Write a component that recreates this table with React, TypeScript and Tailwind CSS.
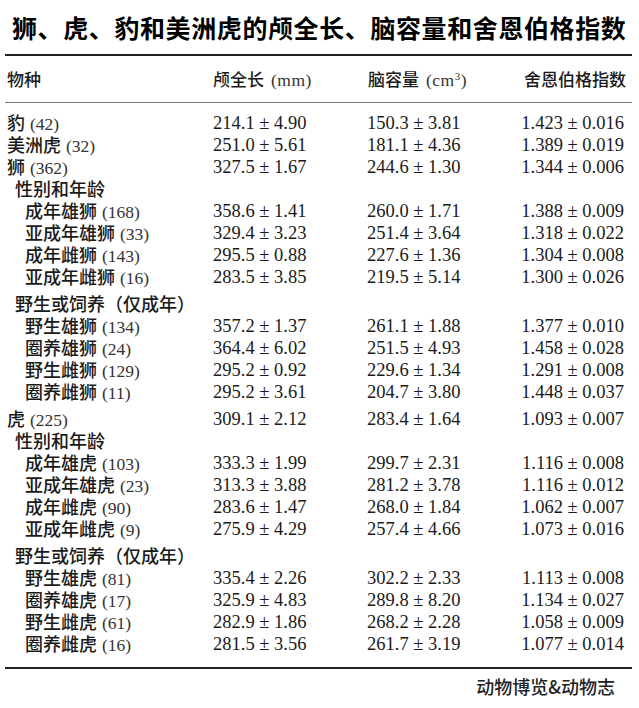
import React from "react"

type Row = {
  label: string
  n?: string
  indent: 0 | 1 | 2
  gap?: boolean
  cells?: [string, string, string]
}

const rows: Row[] = [
  { label: "豹", n: "42", indent: 0, cells: ["214.1 ± 4.90", "150.3 ± 3.81", "1.423 ± 0.016"] },
  { label: "美洲虎", n: "32", indent: 0, cells: ["251.0 ± 5.61", "181.1 ± 4.36", "1.389 ± 0.019"] },
  { label: "狮", n: "362", indent: 0, cells: ["327.5 ± 1.67", "244.6 ± 1.30", "1.344 ± 0.006"] },
  { label: "性别和年龄", indent: 1 },
  { label: "成年雄狮", n: "168", indent: 2, cells: ["358.6 ± 1.41", "260.0 ± 1.71", "1.388 ± 0.009"] },
  { label: "亚成年雄狮", n: "33", indent: 2, cells: ["329.4 ± 3.23", "251.4 ± 3.64", "1.318 ± 0.022"] },
  { label: "成年雌狮", n: "143", indent: 2, cells: ["295.5 ± 0.88", "227.6 ± 1.36", "1.304 ± 0.008"] },
  { label: "亚成年雌狮", n: "16", indent: 2, cells: ["283.5 ± 3.85", "219.5 ± 5.14", "1.300 ± 0.026"] },
  { label: "野生或饲养（仅成年）", indent: 1, gap: true },
  { label: "野生雄狮", n: "134", indent: 2, cells: ["357.2 ± 1.37", "261.1 ± 1.88", "1.377 ± 0.010"] },
  { label: "圈养雄狮", n: "24", indent: 2, cells: ["364.4 ± 6.02", "251.5 ± 4.93", "1.458 ± 0.028"] },
  { label: "野生雌狮", n: "129", indent: 2, cells: ["295.2 ± 0.92", "229.6 ± 1.34", "1.291 ± 0.008"] },
  { label: "圈养雌狮", n: "11", indent: 2, cells: ["295.2 ± 3.61", "204.7 ± 3.80", "1.448 ± 0.037"] },
  { label: "虎", n: "225", indent: 0, gap: true, cells: ["309.1 ± 2.12", "283.4 ± 1.64", "1.093 ± 0.007"] },
  { label: "性别和年龄", indent: 1 },
  { label: "成年雄虎", n: "103", indent: 2, cells: ["333.3 ± 1.99", "299.7 ± 2.31", "1.116 ± 0.008"] },
  { label: "亚成年雄虎", n: "23", indent: 2, cells: ["313.3 ± 3.88", "281.2 ± 3.78", "1.116 ± 0.012"] },
  { label: "成年雌虎", n: "90", indent: 2, cells: ["283.6 ± 1.47", "268.0 ± 1.84", "1.062 ± 0.007"] },
  { label: "亚成年雌虎", n: "9", indent: 2, cells: ["275.9 ± 4.29", "257.4 ± 4.66", "1.073 ± 0.016"] },
  { label: "野生或饲养（仅成年）", indent: 1, gap: true },
  { label: "野生雄虎", n: "81", indent: 2, cells: ["335.4 ± 2.26", "302.2 ± 2.33", "1.113 ± 0.008"] },
  { label: "圈养雄虎", n: "17", indent: 2, cells: ["325.9 ± 4.83", "289.8 ± 8.20", "1.134 ± 0.027"] },
  { label: "野生雌虎", n: "61", indent: 2, cells: ["282.9 ± 1.86", "268.2 ± 2.28", "1.058 ± 0.009"] },
  { label: "圈养雌虎", n: "16", indent: 2, cells: ["281.5 ± 3.56", "261.7 ± 3.19", "1.077 ± 0.014"] },
]

const cjk = "font-['Noto_Sans_CJK_SC',sans-serif]"
const serif = "font-['Liberation_Serif',serif]"

export default function App() {
  return (
    <div className="w-[639px] h-[708px] bg-white text-[#1a1a1a] overflow-hidden">
      <h1 className={`${cjk} pt-[10px] pl-[12px] text-[25px] leading-[34px] font-bold text-black tracking-[0.6px]`}>
        狮、虎、豹和美洲虎的颅全长、脑容量和舍恩伯格指数
      </h1>

      <div className="mt-[10px] ml-[5px] mr-[7px] h-[2px] bg-[#222]" />

      {/* header */}
      <div className="grid grid-cols-[206px_154px_1fr_auto] items-center h-[46px] pl-[7px] pr-[13px] text-[17px] leading-[24px]">
        <div className={`${cjk} font-medium`}>物种</div>
        <div className="whitespace-nowrap">
          <span className={`${cjk} font-medium`}>颅全长</span>
          <span className={`${serif} text-[17.5px] ml-[7px] text-[#333] tracking-[0.5px]`}>(mm)</span>
        </div>
        <div className="pl-px whitespace-nowrap">
          <span className={`${cjk} font-medium`}>脑容量</span>
          <span className={`${serif} text-[17.5px] ml-[7px] text-[#333] tracking-[0.5px]`}>
            (cm<sup className="text-[11px] leading-none">3</sup>)
          </span>
        </div>
        <div className={`${cjk} font-medium`}>舍恩伯格指数</div>
      </div>

      <div className="ml-[5px] mr-[7px] h-px bg-[#777]" />

      <div className="pt-[8px] pb-[13px]">
        {rows.map((r, i) => (
          <div
            key={i}
            className={`grid grid-cols-[206px_154px_1fr_auto] items-center h-[22px] leading-[22px] pl-[7px] pr-[15px] ${
              r.gap ? "mt-[5px]" : ""
            }`}
          >
            <div
              className={`whitespace-nowrap ${
                r.indent === 0 ? "" : r.indent === 1 ? "pl-[8px]" : "pl-[18px]"
              }`}
            >
              <span className={`${cjk} text-[18px] font-medium`}>{r.label}</span>
              {r.n && <span className={`${serif} text-[17.5px] ml-[5px] text-[#333]`}>({r.n})</span>}
            </div>
            {r.cells ? (
              <>
                <div className={`${serif} text-[18.5px] whitespace-nowrap`}>{r.cells[0]}</div>
                <div className={`${serif} text-[18.5px] whitespace-nowrap`}>{r.cells[1]}</div>
                <div className={`${serif} text-[18.5px] text-right whitespace-nowrap`}>{r.cells[2]}</div>
              </>
            ) : null}
          </div>
        ))}
      </div>

      <div className="ml-[5px] mr-[7px] h-[2px] bg-[#222]" />

      <div className="flex justify-end pr-[24px] pt-[4px]">
        <span className={`${cjk} text-[18px] leading-[26px] font-medium text-[#222]`}>动物博览&amp;动物志</span>
      </div>
    </div>
  )
}
